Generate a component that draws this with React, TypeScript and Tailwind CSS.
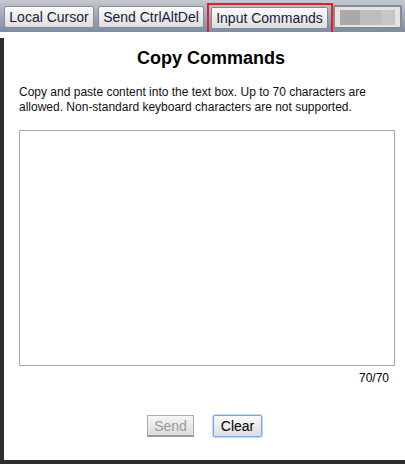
import React from "react";

const toolBtn =
  "h-[22px] shrink-0 whitespace-nowrap text-[14px] leading-none text-[#1a1a40] border border-[#8a8a8a] rounded-[2px] bg-gradient-to-b from-[#fbfbfb] to-[#dedede] flex items-center justify-center";

export default function App() {
  return (
    <div
      className="w-[405px] h-[464px] flex flex-col bg-[#2d2d2d] overflow-hidden"
      style={{ fontFamily: '"Liberation Sans", Arial, sans-serif' }}
    >
      {/* toolbar */}
      <div className="h-8 shrink-0 bg-gradient-to-b from-[#c4c8d0] to-[#7c8ca6] flex items-start pt-[6px] pl-1">
        <button className={toolBtn + " w-[90px]"}>Local Cursor</button>
        <button className={toolBtn + " w-[106px] ml-[4px]"}>Send CtrlAltDel</button>
        <div className="shrink-0 -mt-[3px] ml-[3px] w-[126px] border-2 border-[#e0202c] pl-[2px] pt-[2px] pb-[3px]">
          <button className={toolBtn + " w-[117px]"}>Input Commands</button>
        </div>
        <div className="shrink-0 -mt-[1px] h-[24px] w-[69px] border-2 border-[#8a8a8a] rounded-[2px] bg-[#e4e4e4] flex items-center px-[5px]">
          <div className="h-[15px] w-[20px] bg-[#a9a9a9]" />
          <div className="h-[15px] w-[21px] bg-[#bdbdbd]" />
          <div className="h-[15px] w-[14px] bg-[#c6c6c6]" />
        </div>
      </div>

      <div className="h-[6px] shrink-0 bg-white" />

      {/* panel */}
      <div className="flex-1 pl-1 pb-1 flex">
        <div className="flex-1 bg-white flex flex-col text-black">
          <h1 className="text-center text-[18px] font-bold leading-none mt-[11px] pl-[13px]">
            Copy Commands
          </h1>

          <p className="mt-[18px] ml-[15px] mr-4 text-[12px] leading-[15px] text-[#111]">
            Copy and paste content into the text box. Up to 70 characters are
            allowed. Non-standard keyboard characters are not supported.
          </p>

          <textarea className="mt-[15px] ml-[15px] w-[376px] h-[236px] border border-[#a6a6a6] resize-none outline-none" />

          <div className="mt-[5px] mr-[16px] text-right text-[12px] leading-[14px]">
            70/70
          </div>

          <div className="mt-[30px] flex justify-center gap-[19px]">
            <button
              disabled
              className="h-[22px] w-[47px] text-[14px] leading-none text-[#9a9a9a] border border-[#aaaaaa] border-b-2 border-b-[#9a9a9a] bg-gradient-to-b from-[#f6f6f6] to-[#dcdcdc]"
            >
              Send
            </button>
            <button className="h-[22px] w-[49px] text-[14px] leading-none text-black border border-[#7ea6e6] rounded-[2px] shadow-[0_0_0_1px_#c4d6f4] bg-gradient-to-b from-[#fafafa] to-[#dedede]">
              Clear
            </button>
          </div>
        </div>
      </div>
    </div>
  );
}
